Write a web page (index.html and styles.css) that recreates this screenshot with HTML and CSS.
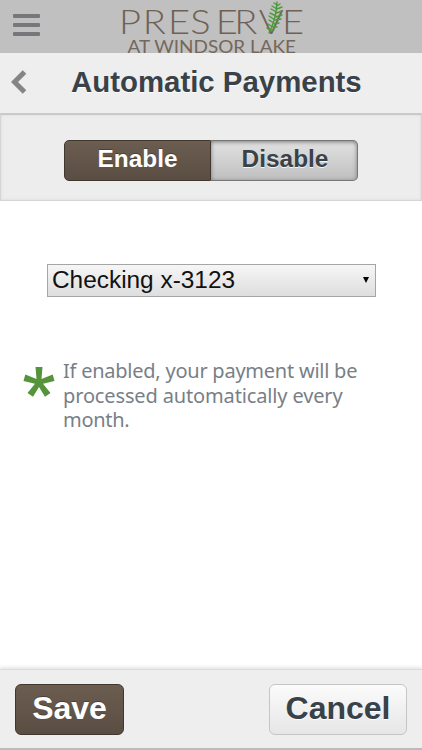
FILE: index.html
```
<!DOCTYPE html>
<html lang="en">

<head>
    <meta charset="UTF-8">
    <meta name="viewport" content="width=device-width, initial-scale=1.0">
    <title>Automatic Payments</title>
    <link rel="stylesheet" href="styles.css">
</head>

<body>
    <div class="page">
        <!-- Top bar -->
        <header class="topbar">
            <button class="menu-button" aria-label="Menu">
                <span></span>
                <span></span>
                <span></span>
            </button>
            <svg class="logo" width="190" height="53" viewBox="0 0 190 53" role="img">
                <text class="logo-name" transform="scale(1.12 1)" x="0.8 22 44.6 64.6 87.2 103.8 125.6 146.4" y="34">PRESERVE</text>
                <text class="logo-place" x="9.5" y="52.5" textLength="168.5" lengthAdjust="spacingAndGlyphs">AT WINDSOR LAKE</text>
                <g class="fern">
                    <path d="M151 33Q158 20 159 2" />
                    <path d="M159 5L156 3M159 6L162 4M159 9L154 6M159 9L164 7M158.500 12L153 9M158.500 13L164 11M158 16L152 13M158 17L164 15M157 20L151 16M157 20L163 19M156 23L151 20M156 24L161 23M155 27L150 24M155 27L159 27M153 30L149 28M153 30L156 30" />
                </g>
            </svg>
        </header>

        <!-- Title -->
        <div class="titlebar">
            <svg class="back" width="16" height="24" viewBox="0 0 16 24">
                <path d="M13.500 2L3.500 12L13.500 22" />
            </svg>
            <h1>Automatic Payments</h1>
        </div>

        <!-- Enable / disable switch -->
        <section class="switch-panel">
            <div class="switch">
                <button class="switch-item enable">Enable</button>
                <button class="switch-item disable">Disable</button>
            </div>
        </section>

        <main class="content">
            <div class="account">
                <span>Checking x-3123</span>
                <svg width="8" height="8" viewBox="0 0 8 8">
                    <path d="M1 1H7L4 7Z" />
                </svg>
            </div>
            <div class="note">
                <svg class="asterisk" width="32" height="31" viewBox="0 0 32 31">
                    <path d="M12.500 0H19.500L18.500 12L29.700 7.600L31.500 14L20 16.800L27.500 26L22 29.800L16 20L10 29.800L4.500 26L12 16.800L0.500 14L2.300 7.600L13.500 12Z" />
                </svg>
                <p>
                    <span class="line-one">If enabled, your payment will be</span><br>
                    <span class="line-two">processed automatically every</span><br>
                    <span class="line-three">month.</span>
                </p>
            </div>
        </main>

        <!-- Actions -->
        <footer class="actions">
            <button class="btn save">Save</button>
            <button class="btn cancel">Cancel</button>
        </footer>
    </div>
</body>

</html>
```

FILE: styles.css
```
* {
    box-sizing: border-box;
}

body {
    margin: 0;
    background-color: #fff;
    color: #394149;
    font-family: "Liberation Sans", Arial, sans-serif;
}

h1,
p {
    margin: 0;
}

button {
    margin: 0;
    padding: 0;
    font-family: inherit;
    font-weight: bold;
}

.page {
    display: flex;
    flex-direction: column;
    height: 750px;
    overflow: hidden;
}

/* Top bar */
.topbar {
    display: flex;
    flex: none;
    height: 53px;
    background-color: #c0c0c0;
}

.menu-button {
    display: flex;
    flex-direction: column;
    gap: 5px;
    width: 27px;
    margin: 14px 78px 0 13px;
    border: 0;
    background: none;
}

.menu-button span {
    width: 27px;
    height: 4px;
    border-radius: 1px;
    background-color: #77777b;
}

.logo-name {
    font-family: Lato, sans-serif;
    font-size: 34px;
    font-weight: 300;
    fill: #6f6155;
}

.logo-place {
    font-family: Lato, sans-serif;
    font-size: 16.5px;
    fill: #75675b;
}

.fern path {
    fill: none;
    stroke: #4d9a3a;
    stroke-width: 1.4;
    stroke-linecap: round;
}

/* Title */
.titlebar {
    display: flex;
    flex: none;
    align-items: center;
    height: 60px;
    padding: 0 0 2px 11px;
    background-color: #eee;
}

.back path {
    fill: none;
    stroke: #858585;
    stroke-width: 5;
}

.titlebar h1 {
    margin-left: 44px;
    font-size: 29.4px;
    line-height: 58px;
    white-space: nowrap;
    text-shadow: 0 1px 0 #fff;
}

/* Switch */
.switch-panel {
    flex: none;
    height: 88px;
    padding: 25px 64px 0;
    border: 1px solid #d5d5d5;
    border-top: 2px solid #c9c9c9;
    background-color: #ededed;
    box-shadow: inset 0 0 3px #d8d8d8;
}

.switch {
    display: flex;
    width: 294px;
    height: 41px;
    margin-left: -1px;
}

.switch-item {
    width: 147px;
    padding-bottom: 3px;
    border: 1px solid #40372f;
    font-size: 24.4px;
}

.enable,
.save {
    background: linear-gradient(#6b5d50, #5a4d42);
    color: #fff;
    text-shadow: 0 -1px 0 #4b4037;
}

.enable {
    border-radius: 5px 0 0 5px;
}

.disable {
    padding-left: 2px;
    border-color: #777;
    border-left: 0;
    border-radius: 0 5px 5px 0;
    background: linear-gradient(#e2e2e2, #bfbfbf);
    color: #394149;
    text-shadow: 0 1px 0 #f4f4f4;
    box-shadow: inset 0 1px 4px #777;
}

/* Account and note */
.content {
    flex: 1;
    padding-top: 63px;
}

.account {
    display: flex;
    align-items: center;
    justify-content: space-between;
    width: 329px;
    height: 33px;
    margin-left: 47px;
    padding: 0 5px 2px 4px;
    border: 1px solid #a5a5a5;
    background: linear-gradient(#f6f6f6, #dedede);
    color: #111;
    font-size: 24.4px;
}

.note {
    display: flex;
    margin: 62px 0 0 23px;
}

.asterisk {
    margin-top: 8px;
}

.asterisk path {
    fill: #56943b;
}

.note p {
    margin-left: 8px;
    color: #787f87;
    font-family: "Noto Sans", sans-serif;
    font-size: 20px;
    line-height: 24.5px;
    white-space: nowrap;
}

.line-one {
    letter-spacing: -0.24px;
}

.line-two {
    letter-spacing: -0.14px;
}

.line-three {
    letter-spacing: -0.3px;
}

/* Actions */
.actions {
    display: flex;
    flex: none;
    justify-content: space-between;
    height: 81px;
    padding: 14px 15px 0;
    border-top: 1px solid #ddd;
    border-bottom: 2px solid #bbb;
    background-color: #eee;
    box-shadow: 0 -1px 4px rgba(0, 0, 0, 0.15);
}

.btn {
    height: 51px;
    padding-bottom: 2px;
    border-radius: 6px;
    font-size: 32px;
}

.save {
    width: 109px;
    border: 1px solid #40372f;
}

.cancel {
    width: 138px;
    border: 1px solid #c5c5c5;
    background: linear-gradient(#fbfbfb, #e6e6e6);
    color: #394149;
    text-shadow: 0 1px 0 #fff;
}
```
